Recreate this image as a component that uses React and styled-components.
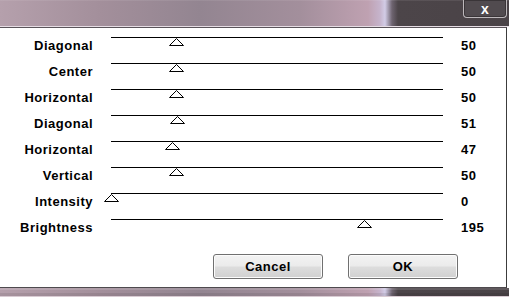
import styled, { createGlobalStyle } from "styled-components";

const GlobalStyle = createGlobalStyle`
  html, body {
    margin: 0;
    padding: 0;
    background: #ffffff;
  }
  body {
    width: 509px;
    height: 297px;
    overflow: hidden;
    font-family: "Liberation Sans", Arial, sans-serif;
  }
`;

const TRACK_WIDTH = 332;
const MAX_VALUE = 255;

const WINDOW_GRADIENT = `linear-gradient(
  to right,
  #b5a0ac 0px,
  #a38f9b 100px,
  #938591 200px,
  #a38f9c 300px,
  #bfa1b1 368px,
  #c6b4cc 380px,
  #d2cce6 385px,
  #6e6470 392px,
  #4c4549 398px,
  #4a4347 509px
)`;

const Window = styled.div`
  display: flex;
  flex-direction: column;
  width: 509px;
  height: 297px;
`;

const TitleBar = styled.div`
  display: flex;
  justify-content: flex-end;
  align-items: flex-start;
  height: 26px;
  background: ${WINDOW_GRADIENT};
  border-bottom: 1px solid #e6dde4;
  box-shadow: inset 0 1px 0 rgba(255, 255, 255, 0.08);
`;

const CloseButton = styled.div`
  display: flex;
  align-items: center;
  justify-content: center;
  width: 44px;
  height: 18px;
  margin-right: 2px;
  background: #514b4f;
  border: 1px solid #bdb8bb;
  border-top: none;
  border-radius: 0 0 4px 4px;
  box-shadow: inset 0 0 0 1px #3a3538;
  color: #ffffff;
  font-family: "Liberation Sans", Arial, sans-serif;
  font-weight: bold;
  font-size: 14px;
  line-height: 14px;
  box-sizing: border-box;
`;

const Body = styled.div`
  display: flex;
  flex-direction: column;
  height: 261px;
  width: 507px;
  background: #ffffff;
  border-top: 1px solid #5a545a;
  border-right: 1px solid #3c3c3c;
  border-bottom: 1px solid #4e4a4e;
  padding-top: 9px;
  box-sizing: border-box;
`;

const Rows = styled.div`
  display: flex;
  flex-direction: column;
`;

const Row = styled.div`
  display: grid;
  grid-template-columns: 111px ${TRACK_WIDTH}px 1fr;
  height: 26px;
  font-size: 13px;
  font-weight: bold;
  letter-spacing: 0.5px;
  color: #000000;
`;

const Label = styled.div`
  text-align: right;
  padding-right: 18px;
  padding-top: 1px;
  line-height: 16px;
`;

const Track = styled.div`
  position: relative;
  border-top: 1px solid #000000;
`;

const Thumb = styled.svg`
  position: absolute;
  top: 0;
  width: 15px;
  height: 8px;
`;

const Value = styled.div`
  padding-left: 18px;
  padding-top: 1px;
  line-height: 16px;
`;

const ButtonBar = styled.div`
  display: flex;
  justify-content: flex-end;
  gap: 25px;
  padding-right: 48px;
  margin-top: 9px;
`;

const Button = styled.div`
  display: flex;
  align-items: center;
  justify-content: center;
  width: 110px;
  height: 25px;
  box-sizing: border-box;
  border: 1px solid #707070;
  border-radius: 3px;
  background: linear-gradient(to bottom, #f3f3f3 0%, #ebebeb 48%, #dddddd 52%, #d0d0d0 100%);
  box-shadow: inset 0 0 0 1px #fcfcfc;
  font-size: 13px;
  font-weight: bold;
  letter-spacing: 0.5px;
  color: #000000;
`;

const BottomBand = styled.div`
  flex: 1;
  background: ${WINDOW_GRADIENT};
  border-bottom: 1px solid #d9cbd3;
  box-shadow: inset 0 2px 0 rgba(255, 255, 255, 0.12), inset 0 -3px 0 rgba(0, 0, 0, 0.08);
`;

const sliders = [
  { label: "Diagonal", value: 50 },
  { label: "Center", value: 50 },
  { label: "Horizontal", value: 50 },
  { label: "Diagonal", value: 51 },
  { label: "Horizontal", value: 47 },
  { label: "Vertical", value: 50 },
  { label: "Intensity", value: 0 },
  { label: "Brightness", value: 195 },
];

const SliderRow = ({ label, value }) => (
  <Row>
    <Label>{label}</Label>
    <Track>
      <Thumb
        viewBox="0 0 15 8"
        style={{ left: (value / MAX_VALUE) * TRACK_WIDTH - 7.5 }}
      >
        <polygon
          points="0.5,7.5 7.5,0.5 14.5,7.5"
          fill="#ffffff"
          stroke="#000000"
          strokeWidth="1"
        />
      </Thumb>
    </Track>
    <Value>{value}</Value>
  </Row>
);

export default function App() {
  return (
    <>
      <GlobalStyle />
      <Window>
        <TitleBar>
          <CloseButton>x</CloseButton>
        </TitleBar>
        <Body>
          <Rows>
            {sliders.map((s, i) => (
              <SliderRow key={i} label={s.label} value={s.value} />
            ))}
          </Rows>
          <ButtonBar>
            <Button>Cancel</Button>
            <Button>OK</Button>
          </ButtonBar>
        </Body>
        <BottomBand />
      </Window>
    </>
  );
}
